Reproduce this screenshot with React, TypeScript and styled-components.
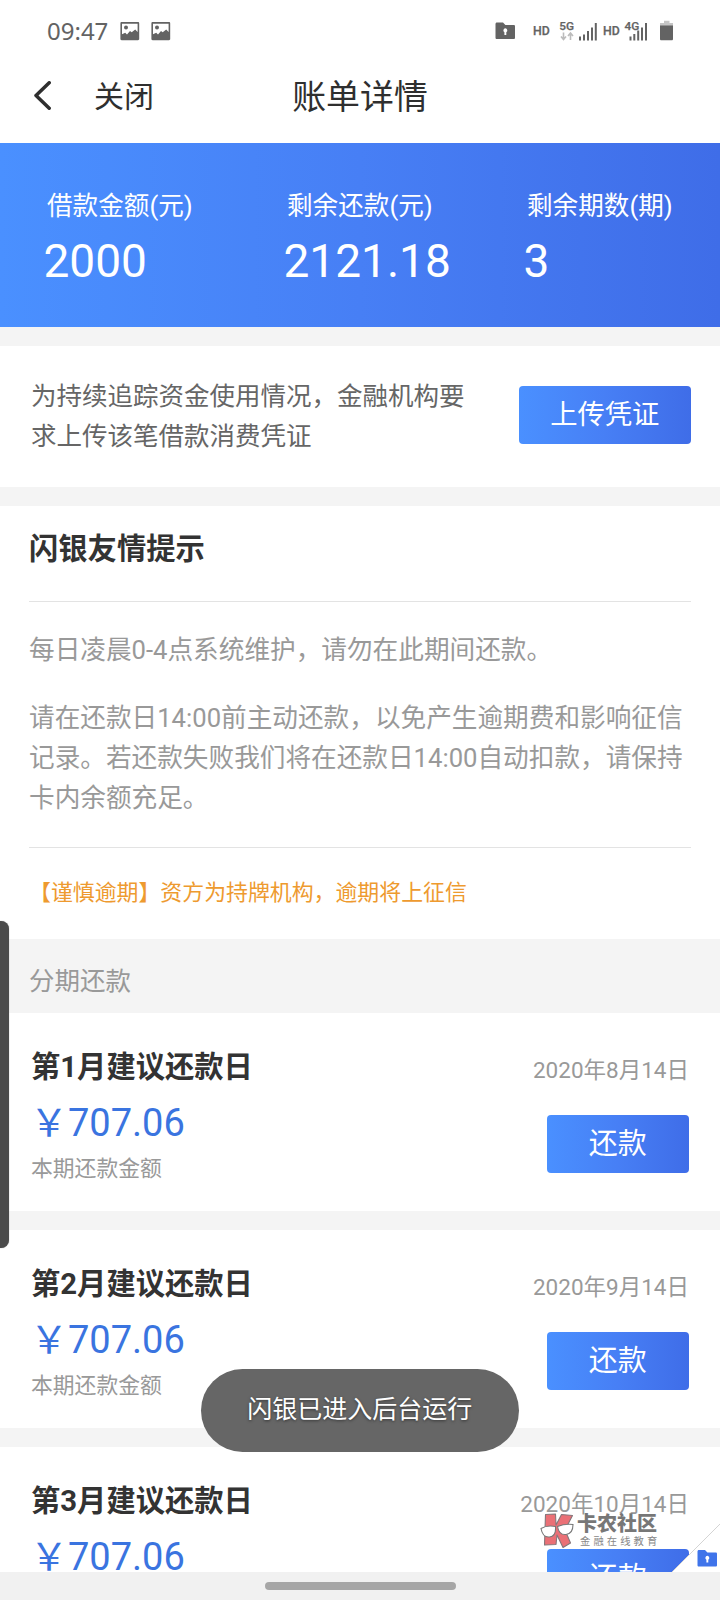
import React from "react";
import styled, { createGlobalStyle } from "styled-components";

const GlobalStyle = createGlobalStyle`
  * { box-sizing: border-box; }
  body {
    margin: 0;
    background: #fff;
    font-family: Roboto, "Noto Sans CJK SC", sans-serif;
  }
  h1, h2, h3, p { margin: 0; font-weight: 400; }
  button { border: 0; padding: 0; font-family: inherit; background: none; }
  svg { display: block; }
`;

const gradient = "linear-gradient(90deg, #4a90ff 0%, #477ff5 50%, #3f6de8 100%)";

const Page = styled.div`
  position: relative;
  width: 720px;
  height: 1600px;
  overflow: hidden;
  display: flex;
  flex-direction: column;
  background: #fff;
`;

const StatusBar = styled.div`
  flex: none;
  height: 62px;
  padding: 0 46px 0 47px;
  display: flex;
  align-items: center;
  justify-content: space-between;
  color: #636363;
`;

const StatusGroup = styled.div<{ $gap?: number }>`
  display: flex;
  align-items: center;
  gap: ${(p) => p.$gap ?? 0}px;
`;

const Clock = styled.span`
  font: 400 24px/62px "Noto Sans", sans-serif;
`;

const PictureIcons = styled.div`
  display: flex;
  gap: 11px;
`;

const NavHeader = styled.header`
  flex: none;
  height: 81px;
  padding: 0 34px;
  display: grid;
  grid-template-columns: 60px 1fr auto 1fr 60px;
  align-items: center;
  color: #2f2f2f;
`;

const CloseText = styled.span`
  font-size: 30px;
  line-height: 70px;
  height: 81px;
`;

const PageTitle = styled.h1`
  font-size: 33.9px;
  line-height: 71px;
  height: 81px;
`;

const BackButton = styled.button`
  height: 81px;
  padding-top: 19px;
  display: flex;
  align-items: flex-start;
`;

const Summary = styled.section`
  flex: none;
  height: 184px;
  padding: 42px 0 0 43px;
  display: flex;
  color: #fff;
  background: ${gradient};
`;

const SummaryItem = styled.div`
  flex: none;
  width: 240px;
`;

const SummaryLabel = styled.div`
  padding-left: 4px;
  font-size: 25.6px;
  line-height: 42px;
`;

const SummaryValue = styled.div`
  padding-left: 0.5px;
  font-size: 46px;
  line-height: 68px;
`;

const Gap = styled.div`
  flex: none;
  height: 19px;
  background: #f4f4f4;
`;

const Notice = styled.section`
  flex: none;
  height: 141px;
  padding: 30px 29px 0 31px;
  display: flex;
  justify-content: space-between;
`;

const NoticeText = styled.p`
  width: 440px;
  font-size: 25.5px;
  line-height: 40px;
  color: #666;
`;

const ActionButton = styled.button<{ $w: number; $size: number }>`
  flex: none;
  width: ${(p) => p.$w}px;
  height: 57.5px;
  border-radius: 4px;
  font-size: ${(p) => p.$size}px;
  line-height: 57px;
  padding-top: 1px;
  color: #fff;
  background: ${gradient};
`;

const NoticeAction = styled.div`
  padding-top: 10px;
`;

const Tips = styled.section`
  flex: none;
  height: 433px;
  padding: 0 29px;
`;

const TipsTitle = styled.h2`
  height: 96px;
  border-bottom: 1px solid #e3e3e3;
  font-size: 29.3px;
  font-weight: 700;
  line-height: 87px;
  color: #333;
`;

const TipsBody = styled.div`
  height: 246px;
  padding-top: 28px;
  border-bottom: 1px solid #e3e3e3;
  font-size: 25.65px;
  line-height: 40px;
  color: #999;
  p + p { margin-top: 28px; }
`;

const Warning = styled.p`
  font-size: 21.9px;
  line-height: 89px;
  color: #ee9a2f;
`;

const SectionLabel = styled.h2`
  flex: none;
  height: 74px;
  padding-left: 29px;
  background: #f4f4f4;
  color: #999;
  font-size: 25.5px;
  line-height: 84px;
`;

const Installment = styled.article`
  flex: none;
  height: 198px;
  padding: 31px 31px 0;
  display: flex;
  justify-content: space-between;
`;

const Side = styled.div<{ $end?: boolean }>`
  display: flex;
  flex-direction: column;
  align-items: ${(p) => (p.$end ? "flex-end" : "flex-start")};
`;

const MonthTitle = styled.h3`
  font-size: 29.3px;
  font-weight: 700;
  line-height: 47px;
  color: #333;
`;

const Amount = styled.div`
  margin-left: -1px;
  font-size: 38px;
  line-height: 64px;
  color: #3a74e0;
`;

const AmountNote = styled.div`
  font-size: 21.8px;
  line-height: 28px;
  color: #999;
`;

const DueDate = styled.div`
  font-size: 22.5px;
  line-height: 53px;
  margin-bottom: 18px;
  color: #999;
`;

const ListArea = styled.main`
  height: 1429px;
  flex: none;
  overflow: hidden;
  display: flex;
  flex-direction: column;
`;

const GestureBar = styled.footer`
  flex: none;
  height: 28px;
  display: flex;
  justify-content: center;
  padding-top: 10px;
  background: #f1f1f1;
`;

const GesturePill = styled.div`
  width: 191px;
  height: 8px;
  border-radius: 4px;
  background: #a6a6a6;
`;

const EdgeHandle = styled.div`
  position: absolute;
  left: -8px;
  top: 921px;
  width: 17px;
  height: 327px;
  border-radius: 8px;
  background: #4b4b4b;
  box-shadow: 0 0 1px #777;
`;

const Toast = styled.div`
  position: absolute;
  left: 200.5px;
  top: 1369px;
  width: 318.5px;
  height: 83px;
  border-radius: 42px;
  background: #666;
  color: #fff;
  text-align: center;
  font-size: 25px;
  line-height: 81px;
  text-shadow: 0 1px 3px rgba(0, 0, 0, 0.5);
`;

const FoldCorner = styled.div`
  position: absolute;
  right: 0;
  top: 1524px;
`;

const Watermark = styled.div`
  position: absolute;
  left: 540px;
  top: 1512px;
  display: flex;
  gap: 3px;
`;

const WatermarkName = styled.div`
  font-size: 20px;
  font-weight: 900;
  line-height: 25px;
  color: #777;
`;

const WatermarkSub = styled.div`
  padding-left: 3px;
  font-size: 10.3px;
  line-height: 10px;
  letter-spacing: 3.1px;
  white-space: nowrap;
  color: #888;
`;

const PictureIcon = () => (
  <svg width="20" height="19" viewBox="0 0 20 19">
    <path
      fill="#636363"
      fillRule="evenodd"
      d="M1.6 0H18c.7 0 1.200.5 1.200 1.200V17c0 .7-.5 1.200-1.200 1.200H1.600c-.7 0-1.200-.5-1.200-1.200V1.200C.4.5.9 0 1.600 0zM2 1.700v10.600l3.200-1.600 1.800 1.800 3-3.500 1.700 1.200 3.500-2.700 2.400 2.500V1.700z"
    />
    <circle cx="6" cy="5.600" r="2" fill="#636363" />
  </svg>
);

const FolderIcon = ({ color }: { color: string }) => (
  <svg width="21" height="18" viewBox="0 0 21 18">
    <path
      fill={color}
      d="M2 .5h6l2.400 2.500h8.300c.8 0 1.300.5 1.300 1.300v11.400c0 .8-.5 1.300-1.300 1.300H1.800C1 17 .5 16.500.5 15.700V2C.5 1.100 1 .5 2 .5z"
    />
    <path fill="#fff" d="M10.300 6.300a2.100 2.100 0 0 1 1 3.900v2.700H9.400v-2.700a2.100 2.100 0 0 1 .9-3.900z" />
  </svg>
);

const SignalLabel = styled.text`
  font-family: Roboto, sans-serif;
  font-weight: 500;
  stroke: #636363;
  stroke-width: 0.25px;
`;

const SignalCluster = () => (
  <svg width="142" height="26" viewBox="532 18 142 26" fill="#636363">
    <SignalLabel x="533" y="34.900" fontSize="12.300">HD</SignalLabel>
    <SignalLabel x="559.300" y="30" fontSize="11.800">5G</SignalLabel>
    <SignalLabel x="603" y="34.900" fontSize="12.300">HD</SignalLabel>
    <SignalLabel x="624.500" y="30" fontSize="11.800">4G</SignalLabel>
    <path
      d="M563.500 32.500v6.500M561 36.500l2.500 3 2.500-3M570.500 40v-6.500M568 36l2.500-3 2.500 3"
      stroke="#bcbcbc"
      strokeWidth="1.600"
      fill="none"
    />
    <path d="M580 36.500v4M584 34.500v6M588 31v9.500M592 27.500v13M595.800 23v17.500" stroke="#636363" strokeWidth="2" />
    <path d="M630.500 36.500v4M634.300 34v6.500M638.200 30.500v10M642 27.500v13M646 23v17.500" stroke="#636363" strokeWidth="2" />
    <path fill="#c5c5c5" d="M664 20.700h5.500v2.300H673v3H660v-3h4z" />
    <path d="M660 25.500h13V39c0 .8-.5 1.300-1.300 1.300h-10.400c-.8 0-1.300-.5-1.300-1.300z" />
  </svg>
);

const WatermarkLogo = () => (
  <svg width="34" height="37" viewBox="0 0 34 37">
    <path
      d="M5.500 2.500 15.500 2l.500 11L21.500 2.500l11 1-7.500 14.500 5.500 13-7.500 4.500-6-12.500-1 9.500-11.500.5z"
      fill="#ea7076"
      stroke="#85767a"
      strokeWidth="1.100"
      strokeLinejoin="round"
    />
    <path
      d="M1 16.500c4-2.500 9-3 14.500-2 .5 6-1.500 10-6 10.500S2 22 1 16.500zM17.500 14.500c5-2 10.500-2.500 15.500-2 0 5.500-2.500 9.500-7 10S18.500 20.500 17.500 14.500z"
      fill="#fff"
      stroke="#777"
      strokeWidth="1.100"
    />
  </svg>
);

const summary = [
  { label: "借款金额(元)", value: "2000" },
  { label: "剩余还款(元)", value: "2121.18" },
  { label: "剩余期数(期)", value: "3" },
];

const installments = [
  { month: 1, date: "2020年8月14日" },
  { month: 2, date: "2020年9月14日" },
  { month: 3, date: "2020年10月14日" },
];

export default function App() {
  return (
    <Page>
      <GlobalStyle />
      <StatusBar>
        <StatusGroup $gap={12}>
          <Clock>09:47</Clock>
          <PictureIcons>
            <PictureIcon />
            <PictureIcon />
          </PictureIcons>
        </StatusGroup>
        <StatusGroup $gap={16}>
          <FolderIcon color="#636363" />
          <SignalCluster />
        </StatusGroup>
      </StatusBar>
      <NavHeader>
        <BackButton aria-label="返回">
          <svg width="18" height="30" viewBox="0 0 18 30">
            <path d="M15.200 1.800 2 14.500 15.200 27.200" fill="none" stroke="#2f2f2f" strokeWidth="3.500" strokeLinecap="round" strokeLinejoin="round" />
          </svg>
        </BackButton>
        <CloseText>关闭</CloseText>
        <PageTitle>账单详情</PageTitle>
      </NavHeader>
      <ListArea>
        <Summary>
          {summary.map((s) => (
            <SummaryItem key={s.label}>
              <SummaryLabel>{s.label}</SummaryLabel>
              <SummaryValue>{s.value}</SummaryValue>
            </SummaryItem>
          ))}
        </Summary>
        <Gap />
        <Notice>
          <NoticeText>为持续追踪资金使用情况，金融机构要求上传该笔借款消费凭证</NoticeText>
          <NoticeAction>
            <ActionButton $w={172.5} $size={27.3}>上传凭证</ActionButton>
          </NoticeAction>
        </Notice>
        <Gap />
        <Tips>
          <TipsTitle>闪银友情提示</TipsTitle>
          <TipsBody>
            <p>每日凌晨0-4点系统维护，请勿在此期间还款。</p>
            <p>请在还款日14:00前主动还款，以免产生逾期费和影响征信记录。若还款失败我们将在还款日14:00自动扣款，请保持卡内余额充足。</p>
          </TipsBody>
          <Warning>【谨慎逾期】资方为持牌机构，逾期将上征信</Warning>
        </Tips>
        <SectionLabel>分期还款</SectionLabel>
        {installments.map((it, i) => (
          <React.Fragment key={it.month}>
            {i > 0 && <Gap />}
            <Installment>
              <Side>
                <MonthTitle>第{it.month}月建议还款日</MonthTitle>
                <Amount>￥707.06</Amount>
                <AmountNote>本期还款金额</AmountNote>
              </Side>
              <Side $end>
                <DueDate>{it.date}</DueDate>
                <ActionButton $w={142.5} $size={29}>还款</ActionButton>
              </Side>
            </Installment>
          </React.Fragment>
        ))}
      </ListArea>
      <GestureBar>
        <GesturePill />
      </GestureBar>
      <FoldCorner>
        <svg width="48" height="48" viewBox="0 0 48 48">
          <path d="M48 0v48H0z" fill="#fff" />
          <path d="M48 0 0 48" stroke="#d4d4d4" strokeWidth="1" />
          <g transform="translate(25 25.500)">
            <FolderIcon color="#3f74ea" />
          </g>
        </svg>
      </FoldCorner>
      <Watermark>
        <WatermarkLogo />
        <div>
          <WatermarkName>卡农社区</WatermarkName>
          <WatermarkSub>金融在线教育</WatermarkSub>
        </div>
      </Watermark>
      <EdgeHandle />
      <Toast>闪银已进入后台运行</Toast>
    </Page>
  );
}
